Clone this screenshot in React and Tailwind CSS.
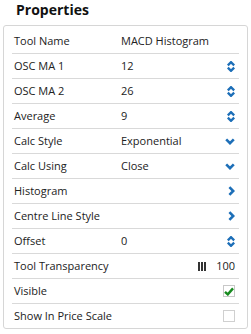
import React from 'react';

const rows = [
  { label: 'Tool Name', value: 'MACD Histogram' },
  { label: 'OSC MA 1', value: '12', icon: 'spin' },
  { label: 'OSC MA 2', value: '26', icon: 'spin' },
  { label: 'Average', value: '9', icon: 'spin' },
  { label: 'Calc Style', value: 'Exponential', icon: 'down' },
  { label: 'Calc Using', value: 'Close', icon: 'down' },
  { label: 'Histogram', icon: 'right' },
  { label: 'Centre Line Style', icon: 'right' },
  { label: 'Offset', value: '0', icon: 'spin' },
  { label: 'Tool Transparency', icon: 'alpha' },
  { label: 'Visible', icon: 'checked' },
  { label: 'Show In Price Scale', icon: 'unchecked' },
];

function Icon({ type }) {
  if (type === 'spin') {
    return (
      <svg width="8" height="11" viewBox="0 0 8 11" className="text-[#1d6fb8]">
        <path d="M0.8 4.4 L4 1.2 L7.2 4.4" fill="none" stroke="currentColor" strokeWidth="2.4" />
        <path d="M0.8 6.6 L4 9.8 L7.2 6.6" fill="none" stroke="currentColor" strokeWidth="2.4" />
      </svg>
    );
  }
  if (type === 'down') {
    return (
      <svg width="10" height="7" viewBox="0 0 10 7" className="text-[#1d6fb8]">
        <path d="M1.2 1.4 L5 5.2 L8.8 1.4" fill="none" stroke="currentColor" strokeWidth="2.6" />
      </svg>
    );
  }
  if (type === 'right') {
    return (
      <svg width="7" height="10" viewBox="0 0 7 10" className="text-[#1d6fb8]">
        <path d="M1.4 1.2 L5.2 5 L1.4 8.8" fill="none" stroke="currentColor" strokeWidth="2.6" />
      </svg>
    );
  }
  if (type === 'alpha') {
    return (
      <div className="flex items-center gap-[10px]">
        <div className="flex gap-[1px]">
          <div className="w-[2px] h-[9px] bg-[#333]" />
          <div className="w-[2px] h-[9px] bg-[#333]" />
          <div className="w-[2px] h-[9px] bg-[#333]" />
        </div>
        <span>100</span>
      </div>
    );
  }
  if (type === 'checked') {
    return (
      <div className="w-[12px] h-[12px] border border-[#c8c8c8] bg-white flex items-center justify-center">
        <svg width="10" height="9" viewBox="0 0 10 9" className="text-[#178a1f]">
          <path d="M1 4.8 L3.8 7.4 L9 1.4" fill="none" stroke="currentColor" strokeWidth="2.4" />
        </svg>
      </div>
    );
  }
  if (type === 'unchecked') {
    return <div className="w-[12px] h-[12px] border border-[#d0d0d0] bg-white" />;
  }
  return null;
}

export default function App() {
  return (
    <div className="w-[251px] h-[334px] bg-white text-[#222] font-['Open_Sans',sans-serif]">
      <h1 className="pl-[16px] pt-0 h-[25px] text-[14px] font-bold text-[#111] leading-[19px]">Properties</h1>

      <div className="mx-[3px] w-[245px] border border-[#d6d6d6] rounded-[3px] px-2 pt-[3px]">
        {rows.map((r, i) => (
          <div
            key={r.label}
            className={`flex items-center h-[24px] text-[11px] pl-[2px] pr-[4px] ${i < rows.length - 1 ? 'border-b border-[#d9d9d9] h-[25px]' : ''}`}
          >
            <span className="w-[107px] shrink-0">{r.label}</span>
            <span className="flex-1">{r.value}</span>
            <span className="flex items-center justify-end">
              <Icon type={r.icon} />
            </span>
          </div>
        ))}
      </div>
    </div>
  );
}
